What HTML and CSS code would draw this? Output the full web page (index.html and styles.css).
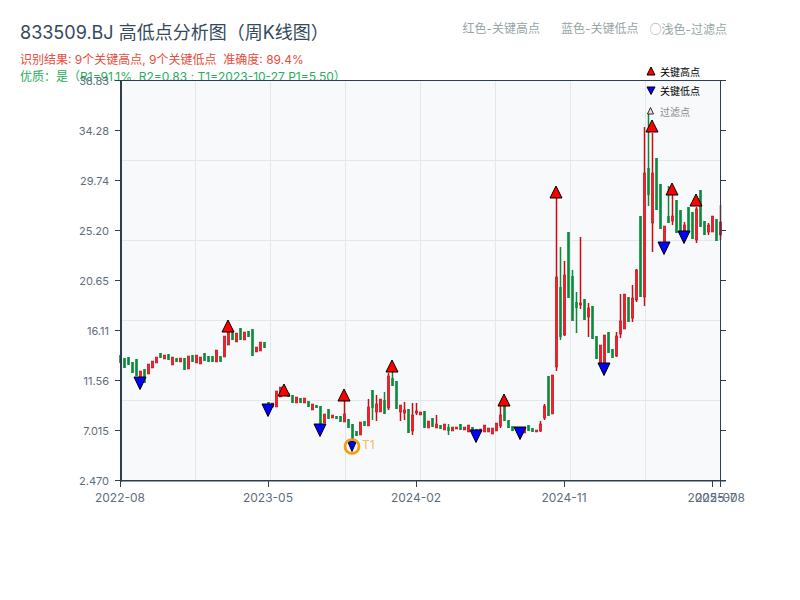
FILE: index.html
```html
<!DOCTYPE html>
<html lang="zh-CN">
<head>
    <meta charset="UTF-8">
    <title>833509.BJ 高低点分析图</title>
    <link rel="stylesheet" href="styles.css">
</head>
<body>
    <div class="header">
        <div class="title-row">
            <h1>833509.BJ 高低点分析图（周K线图）</h1>
            <div class="legend">
                <span>红色-关键高点</span>
                <span>蓝色-关键低点</span>
                <span class="legend-last"><span class="legend-circle">○</span>浅色-过滤点</span>
            </div>
        </div>
        <p class="result">识别结果: 9个关键高点, 9个关键低点&nbsp;&nbsp;准确度: 89.4%</p>
        <p class="quality">优质<span class="mid-colon">：</span>是（R1=91.1%, R2=0.83 ; T1=2023-10-27 P1=5.50）</p>
    </div>

    <svg id="chart" class="chart" viewBox="0 81 800 519" xmlns="http://www.w3.org/2000/svg">
        <rect class="plot-bg" x="120" y="81" width="600" height="400"></rect>
        <g id="grid"></g>
        <g id="candles"></g>
        <g id="axes"></g>
        <g id="ticks"></g>
        <g id="markers"></g>
        <circle class="t1-ring" cx="352" cy="446.5" r="7"></circle>
        <text class="t1-label" x="362" y="449">T1</text>
        <text class="key-label" x="660" y="76">关键高点</text>
        <text class="key-label" x="660" y="95">关键低点</text>
        <text class="key-label key-muted" x="660" y="116">过滤点</text>
    </svg>

    <script src="chart.js"></script>
</body>
</html>
```

FILE: styles.css
```css
body {
    font-family: Inter, "Noto Sans CJK SC", sans-serif;
    background-color: white;
    margin: 0;
}
.header {
    height: 81px;
    padding: 21px 73px 0 20px;
    box-sizing: border-box;
}
.title-row {
    display: flex;
    justify-content: space-between;
    align-items: flex-start;
    height: 28px;
}
h1 {
    font-size: 18px;
    font-weight: normal;
    line-height: 24px;
    color: #34495e;
    margin: 0;
}
.legend {
    display: flex;
    gap: 21px;
    font-size: 12px;
    line-height: 16px;
    color: #95a5a6;
}
.legend .legend-last {
    margin-left: -10px;
}
.legend-circle {
    font-family: "Noto Sans CJK SC", sans-serif;
}
.result, .quality {
    font-size: 12px;
    line-height: 17px;
    margin: 0;
}
.result {
    color: #e74c3c;
    margin-top: 2px;
}
.quality {
    color: #27ae60;
}
.mid-colon {
    font-family: "Noto Sans CJK TC", sans-serif;
    line-height: 0;
}
.chart {
    display: block;
    position: relative;
    width: 800px;
    height: 519px;
    overflow: visible;
}
.plot-bg {
    fill: #f8f9fb;
}
.grid-line {
    stroke: #e3e6ea;
    stroke-width: 1;
}
.axis-line {
    stroke: #2c3e50;
    fill: none;
}
.tick-label {
    font-size: 11px;
    fill: #5d6d7e;
}
.date-label {
    font-size: 12px;
}
.wick-up {
    stroke: #cc0a14;
    stroke-width: 1.5;
}
.wick-down {
    stroke: #0a8a3c;
    stroke-width: 1.5;
}
.body-up {
    fill: #f0202c;
    stroke: #cc0a14;
    stroke-width: 0.5;
}
.body-down {
    fill: #0a8a3c;
}
.mark-high {
    fill: #ff0000;
    stroke: black;
    stroke-width: 1;
}
.mark-low {
    fill: #0000ff;
    stroke: black;
    stroke-width: 1;
}
.mark-filtered {
    fill: #ffd8d8;
    stroke: black;
    stroke-width: 0.8;
}
.t1-ring {
    fill: none;
    stroke: #f39c12;
    stroke-width: 2.7;
}
.t1-label {
    font-size: 12px;
    fill: #f5b95f;
}
.key-label {
    font-size: 10px;
    fill: black;
}
.key-muted {
    fill: #888;
}
```

FILE: chart.js
```js
const SVG_NS = 'http://www.w3.org/2000/svg';

// [цвет, верх тени, низ тени, верх тела, низ тела] - в пикселях, один столбик на неделю
const candles = [
    ['g',355,363],['g',358,368],['g',357,365],['g',362,373],['g',359,376],['r',371,380],['g',369,383],['r',364,374],
    ['r',361,368],['r',357,363],['g',353,358],['r',355,359],['g',354,360],['r',357,365],['g',358,362],['r',358,362],
    ['g',358,370],['r',356,369],['g',355,362],['r',355,363],['r',357,364],['g',353,361],['g',356,362],['g',356,362],
    ['r',350,362],['g',356,362],['r',336,357],['r',332,345],['g',332,340],['r',333,342],['g',328,340],['r',332,340],
    ['g',331,337],['g',329,356],['r',347,352],['r',342,351],['g',342,348],['g',402,405],['r',403,407],['r',391,407],
    ['r',387,397],['g',390,395],['g',393,397],['g',395,403],['r',397,403],['g',398,403],['r',398,403],['g',401,407],
    ['r',404,410],['g',405,408],['g',406,425],['r',414,423],['g',409,419],['r',415,418],['g',416,419],['g',416,422],
    ['r',400,422,414,422],['g',419,428],['g',424,440],['g',431,436],['r',422,435],['g',421,426],['r',399,426,407,426],
    ['g',390,420,390,408],['r',395,421,404,412],['r',399,412],['g',392,414,400,414],['r',373,410,376,408],['g',370,386,378,386],
    ['g',381,409],['r',405,421,405,412],['r',402,420,410,413],['g',409,433],['r',403,435,415,431],['r',403,415,411,413],
    ['r',412,415],['g',411,428],['r',421,428],['g',418,427],['r',415,428,424,428],['g',425,429],['r',424,430],['g',424,435,427,431],
    ['r',427,431],['r',427,429],['g',424,430],['r',427,430],['r',425,432],['g',427,431],['g',429,431],['r',429,432],
    ['r',425,432],['r',428,432],['r',428,434],['r',423,431],['r',405,428,415,426],['g',402,421],['g',420,428],['g',426,431],
    ['g',428,431],['r',428,432],['r',428,433],['g',425,431],['g',428,432],['r',430,432],['r',421,432,424,431],['r',404,420,406,418],
    ['g',376,416],['r',375,414],['r',190,371,277,367],['g',247,340,287,337],['r',261,336,275,335],['g',232,298],['g',270,321,276,321],
    ['g',292,333,302,308],['r',237,309,303,305],['g',299,320],['r',303,337,308,317],['g',306,339],['g',336,359],['r',345,363],
    ['r',335,363],['g',332,353],['g',349,358],['r',332,357,336,356],['r',294,338,321,334],['r',294,329],['g',297,322],
    ['r',285,322,298,318],['r',269,302,270,300],['g',216,297],['r',127,306,173,297],['g',113,206,168,195],['r',133,252,173,223],
    ['g',158,210],['g',184,229],['r',226,243],['g',186,223,216,223],['r',194,225,216,221],['g',200,233],['g',210,234],['r',222,233,225,231],
    ['g',207,233],['g',212,239],['r',207,243,209,240],['g',190,227],['g',221,235],['r',223,235,225,232],['r',216,232],['g',219,241],['r',205,240,222,235]
];

// центр маркера по x и основание треугольника по y
const highMarks = [[228,332],[284,396],[344,401],[392,372],[504,406],[556,198],[652,132],[672,195],[696,206]];
const lowMarks = [[140,377],[268,404],[320,424],[476,430],[520,427],[604,363],[664,242],[684,231]];

const priceTicks = ['38.83','34.28','29.74','25.20','20.65','16.11','11.56','7.015','2.470'];
const dateTicks = [[120,'2022-08'],[268,'2023-05'],[416,'2024-02'],[564,'2024-11'],[712,'2025-07'],[720,'2025-08']];

function add(parentId, tag, attrs, text) {
    const el = document.createElementNS(SVG_NS, tag);
    for (const key in attrs) {
        el.setAttribute(key, attrs[key]);
    }
    if (text) {
        el.textContent = text;
    }
    document.getElementById(parentId).appendChild(el);
}

function line(parentId, x1, y1, x2, y2, cls, width) {
    const attrs = { x1: x1, y1: y1, x2: x2, y2: y2, class: cls };
    if (width) {
        attrs['stroke-width'] = width;
    }
    add(parentId, 'line', attrs);
}

function triangle(cx, baseY, dir, half, height, cls) {
    const points = `${cx - half},${baseY} ${cx + half},${baseY} ${cx},${baseY + dir * height}`;
    add('markers', 'polygon', { points: points, class: cls });
}

for (let x = 195.5; x < 720; x += 75) {
    line('grid', x, 81, x, 481, 'grid-line');
}
for (let y = 160.5; y < 480; y += 80) {
    line('grid', 120, y, 720, y, 'grid-line');
}

candles.forEach((c, i) => {
    const x = 120.5 + i * 4;
    const up = c[0] === 'r';
    const top = c.length > 3 ? c[3] : c[1];
    const bottom = c.length > 3 ? c[4] : c[2];
    line('candles', x, c[1], x, c[2], up ? 'wick-up' : 'wick-down');
    add('candles', 'rect', {
        x: x - 1.25, y: top, width: 2.5, height: bottom - top,
        class: up ? 'body-up' : 'body-down'
    });
});

line('axes', 121, 80.5, 121, 481.5, 'axis-line', 2);
line('axes', 120, 480.8, 726, 480.8, 'axis-line', 1.5);
line('axes', 120, 80.5, 726, 80.5, 'axis-line', 1);
line('axes', 720.5, 80.5, 720.5, 481.5, 'axis-line', 1);

priceTicks.forEach((label, i) => {
    const y = 80.5 + i * 50;
    line('ticks', 115, y, 120, y, 'axis-line', 1);
    line('ticks', 720, y, 726, y, 'axis-line', 1);
    add('ticks', 'text', { x: 109, y: y + 4.5, class: 'tick-label', 'text-anchor': 'end' }, label);
});

dateTicks.forEach(([x, label]) => {
    line('ticks', x + 0.5, 481, x + 0.5, 487, 'axis-line', 1);
    add('ticks', 'text', { x: x, y: 502, class: 'tick-label date-label', 'text-anchor': 'middle' }, label);
});

highMarks.forEach(([x, y]) => triangle(x, y, -1, 6, 12, 'mark-high'));
lowMarks.forEach(([x, y]) => triangle(x, y, 1, 6, 12.5, 'mark-low'));
triangle(352, 441, 1, 4.5, 10.5, 'mark-low');

triangle(651, 75, -1, 4, 8, 'mark-high');
triangle(651, 87, 1, 4, 7.5, 'mark-low');
triangle(650.5, 114, -1, 3, 6.5, 'mark-filtered');
```
